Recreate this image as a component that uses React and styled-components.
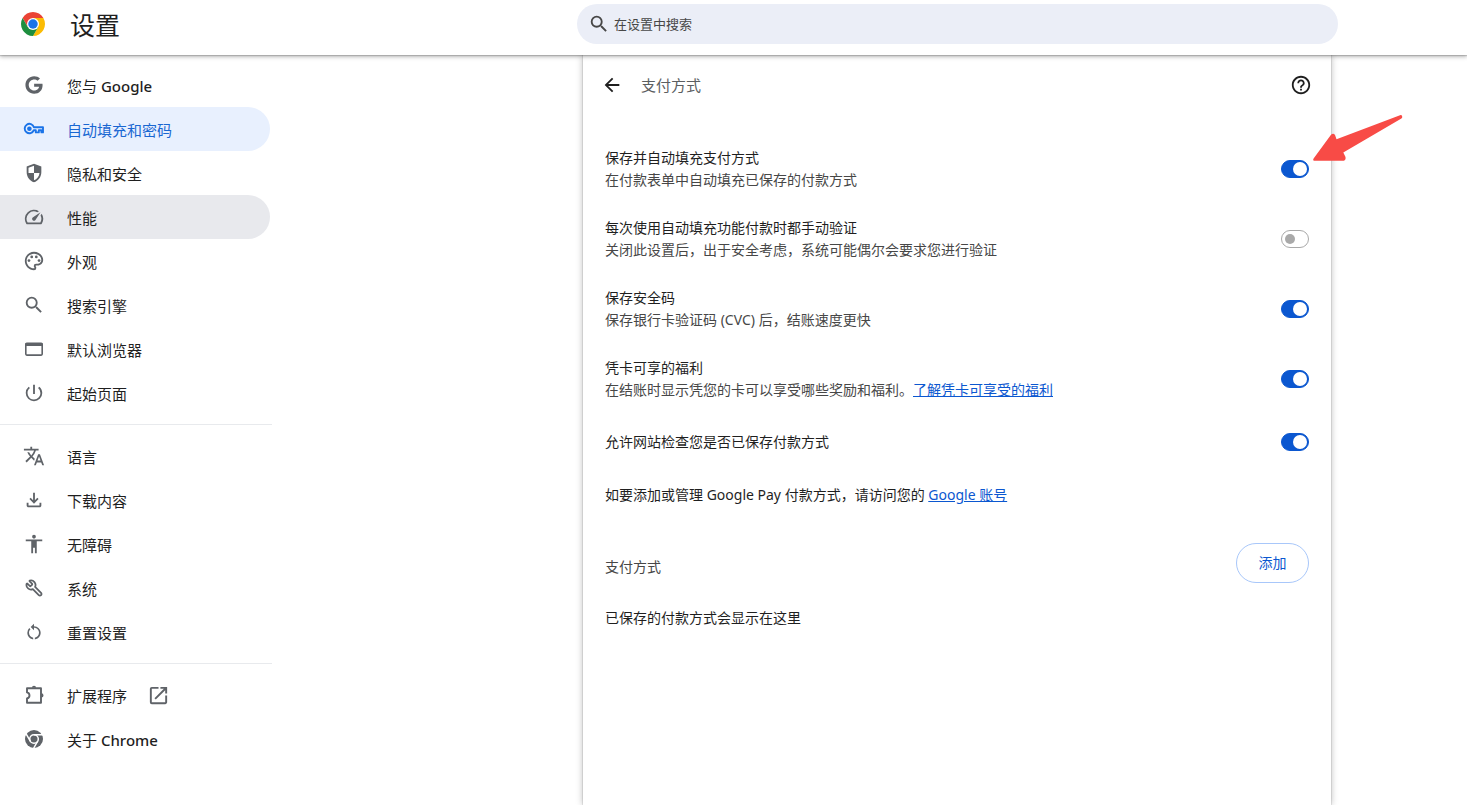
import React from "react";
import styled, { createGlobalStyle, css } from "styled-components";
import { FaGoogle } from "react-icons/fa";
import { Wrench } from "lucide-react";
import {
  MdAccessibility,
  MdArrowBack,
  MdHelpOutline,
  MdOpenInNew,
  MdOutlinePalette,
  MdPowerSettingsNew,
  MdRestartAlt,
  MdSearch,
  MdSpeed,
  MdTranslate,
} from "react-icons/md";

const GlobalStyle = createGlobalStyle`
  *, *::before, *::after { box-sizing: border-box; }
  body {
    margin: 0;
    background: #fff;
    color: #1f1f1f;
    font-family: "Noto Sans", "Noto Sans CJK SC", sans-serif;
    font-size: 14px;
    line-height: 22px;
  }
`;

const Page = styled.div`
  min-height: 100vh;
  display: flex;
  flex-direction: column;
`;

const TopBar = styled.header`
  position: sticky;
  top: 0;
  z-index: 2;
  height: 55px;
  display: grid;
  grid-template-columns: 272px 305fr minmax(0, 761px) 129fr;
  background: #fff;
  box-shadow: 0 1px 1px rgba(0, 0, 0, 0.16), 0 2px 4px rgba(0, 0, 0, 0.26);
`;

const Brand = styled.div`
  display: flex;
  align-items: center;
  gap: 25px;
  height: 48px;
  padding-left: 21px;
`;

const BrandTitle = styled.h1`
  margin: 0;
  padding-top: 2px;
  font-size: 25px;
  font-weight: 400;
  line-height: 32px;
`;

const SearchBox = styled.label`
  grid-column: 3;
  display: flex;
  align-items: center;
  gap: 4px;
  height: 40px;
  margin-top: 4px;
  padding: 0 20px 0 11px;
  border-radius: 20px;
  background: #ebeef7;
  color: #474747;
`;

const SearchInput = styled.input`
  flex: 1;
  min-width: 0;
  border: 0;
  padding: 0;
  outline: 0;
  background: transparent;
  font: inherit;
  font-size: 13px;
  color: #1f1f1f;
  &::placeholder {
    color: #474747;
    opacity: 1;
  }
`;

const Body = styled.div`
  flex: 1;
  display: grid;
  grid-template-columns: 272px 311fr minmax(0, 748px) 136fr;
`;

const Sidebar = styled.nav`
  padding-top: 8px;
`;

const NavGroup = styled.div`
  & + & {
    margin-top: 9px;
    padding-top: 9px;
    border-top: 1px solid #e8eaed;
  }
`;

const NavItem = styled.a`
  display: flex;
  align-items: center;
  height: 44px;
  margin-right: 2px;
  padding-left: 23px;
  border-radius: 0 22px 22px 0;
  color: #1f1f1f;
  font-size: 15px;
  text-decoration: none;
  ${(p) =>
    p.$state === "selected" &&
    css`
      background: #e8f0fe;
      color: #1967d2;
    `}
  ${(p) =>
    p.$state === "hovered" &&
    css`
      background: #e8e9ed;
    `}
`;

const NavIcon = styled.span`
  display: flex;
  justify-content: center;
  width: 22px;
  margin-right: 22px;
  color: ${(p) => (p.$active ? "#1a73e8" : "#5f6368")};
`;

const NavLabel = styled.span`
  padding-top: 1px;
  white-space: pre;
`;

const Latin = styled.span`
  font-weight: 500;
`;

const NavTrail = styled.span`
  display: flex;
  margin-left: 20px;
  color: #5f6368;
`;

const MirroredWrench = styled(Wrench)`
  transform: scaleX(-1);
`;

const Card = styled.main`
  grid-column: 3;
  background: #fff;
  box-shadow: 0 0 1px rgba(0, 0, 0, 0.45), 0 0 7px rgba(0, 0, 0, 0.28);
`;

const CardHeader = styled.div`
  display: flex;
  align-items: center;
  height: 60px;
  padding: 0 19px 0 18px;
`;

const CardTitle = styled.h2`
  flex: 1;
  margin: 0 0 0 18px;
  color: #5b5e61;
  font-size: 15px;
  font-weight: 400;
`;

const IconButton = styled.button`
  display: flex;
  border: 0;
  padding: 0;
  background: none;
  color: #1f1f1f;
  cursor: pointer;
`;

const SettingList = styled.div`
  padding: 19px 22px 0;
`;

const SettingRow = styled.div`
  display: flex;
  align-items: center;
  justify-content: space-between;
  gap: 22px;
  padding: ${(p) => (p.$single ? "17px 0 16px" : "13px 0")};
`;

const SettingTitle = styled.label`
  display: block;
`;

const SettingNote = styled.div`
  color: #474747;
`;

const TextLink = styled.a`
  color: #0b57d0;
  text-decoration: underline;
`;

const SwitchSlot = styled.span`
  position: relative;
  display: flex;
`;

const Switch = styled.input`
  appearance: none;
  display: flex;
  align-items: center;
  width: 28px;
  height: 18px;
  margin: 0;
  padding: 0 3px;
  border: 1px solid #a9a9a9;
  border-radius: 9px;
  background: #fff;
  cursor: pointer;
  &::before {
    content: "";
    width: 10px;
    height: 10px;
    border-radius: 50%;
    background: #a9a9a9;
  }
  &:checked {
    justify-content: flex-end;
    padding: 0 1px;
    border-color: #0b57d0;
    background: #0b57d0;
  }
  &:checked::before {
    width: 14px;
    height: 14px;
    background: #fff;
  }
`;

const Pointer = styled.svg`
  position: absolute;
  left: 31px;
  top: -46px;
  z-index: 1;
  pointer-events: none;
`;

const Paragraph = styled.p`
  margin: 0;
  padding: 15px 0;
`;

const SectionHeader = styled.div`
  display: flex;
  align-items: center;
  justify-content: space-between;
  margin-top: 22px;
`;

const SectionTitle = styled.h3`
  margin: 0;
  padding-top: 8px;
  color: #474747;
  font-size: 14px;
  font-weight: 400;
`;

const AddButton = styled.button`
  width: 73px;
  height: 40px;
  border: 1px solid #a8c7fa;
  border-radius: 20px;
  background: #fff;
  color: #0b57d0;
  font: inherit;
  cursor: pointer;
`;

const EmptyNote = styled.p`
  margin: 0;
  padding: 24px 0;
`;

const ChromeLogo = () => (
  <svg width="24" height="24" viewBox="0 0 48 48" aria-hidden="true">
    <path fill="#ea4335" d="M24 12h20.78A24 24 0 0 0 3.22 12l10.39 18L24 12Z" />
    <path fill="#fbbc04" d="M34.39 30 24 48A24 24 0 0 0 44.78 12H24l10.39 18Z" />
    <path fill="#1e8e3e" d="M13.61 30 3.22 12A24 24 0 0 0 24 48l10.39-18H13.61Z" />
    <circle cx="24" cy="24" r="12" fill="#fff" />
    <circle cx="24" cy="24" r="9.5" fill="#1a73e8" />
  </svg>
);

const KeyIcon = () => (
  <svg width="22" height="22" viewBox="0 0 22 22" fill="none" aria-hidden="true">
    <path
      d="M10.9 9.2H20v5.2h-1.6v-2.2h-2.6v2.2h-3v-2.2h-2a4.7 4.7 0 1 1 .1-3Z"
      stroke="currentColor"
      strokeWidth="1.9"
      strokeLinejoin="round"
    />
    <circle cx="6.4" cy="10.7" r="2.3" fill="currentColor" />
  </svg>
);

const ShieldIcon = () => (
  <svg width="22" height="22" viewBox="0 0 24 24" fill="currentColor" aria-hidden="true">
    <path
      fillRule="evenodd"
      d="M12 2 4 5v6.1c0 5 3.4 9.7 8 10.9 4.6-1.2 8-5.9 8-10.9V5l-8-3Zm0 2.1v7.9h6c-.4 3.7-2.800 6.900-6 7.900V12H6V6.300l6-2.200Z"
    />
  </svg>
);

const WindowIcon = () => (
  <svg width="22" height="22" viewBox="0 0 22 22" aria-hidden="true">
    <rect x="2.8" y="5.3" width="16.4" height="11.8" rx="1" fill="none" stroke="currentColor" strokeWidth="1.6" />
    <path d="M2.5 5h17v3h-17Z" fill="currentColor" />
  </svg>
);

const DownloadIcon = () => (
  <svg width="22" height="22" viewBox="0 0 24 24" fill="currentColor" aria-hidden="true">
    <path d="m12 16-5-5 1.4-1.45 2.6 2.6V4h2v8.150l2.6-2.6L17 11l-5 5Zm-6 4q-.825 0-1.413-.588T4 18v-3h2v3h12v-3h2v3q0 .825-.588 1.413T18 20H6Z" />
  </svg>
);

const PuzzleIcon = () => (
  <svg width="22" height="22" viewBox="0 0 22 22" aria-hidden="true">
    <path
      d="M4 4.2h14v14.5H4V14.400c3.300-.8 3.300-5.200 0-6Z"
      fill="none"
      stroke="currentColor"
      strokeWidth="1.900"
      strokeLinejoin="round"
    />
    <path d="M8.900 3.800a2.100 2.100 0 0 1 4.200 0ZM18.400 9.300a2.100 2.100 0 0 1 0 4.200Z" fill="currentColor" />
  </svg>
);

const ChromeMonoIcon = () => (
  <svg width="22" height="22" viewBox="0 0 22 22" aria-hidden="true">
    <circle cx="11" cy="11" r="9" fill="currentColor" />
    <circle cx="11" cy="11" r="4.3" fill="none" stroke="#fff" strokeWidth="1.5" />
    <path d="M11 6.700h9M7.300 13.200 2.800 5.400M14.700 13.200l-4.500 7.800" stroke="#fff" strokeWidth="1.5" />
  </svg>
);

const NAV = [
  [
    { icon: <FaGoogle size={18} />, text: "您与 ", latin: "Google" },
    { icon: <KeyIcon />, text: "自动填充和密码", state: "selected" },
    { icon: <ShieldIcon />, text: "隐私和安全" },
    { icon: <MdSpeed size={22} />, text: "性能", state: "hovered" },
    { icon: <MdOutlinePalette size={22} />, text: "外观" },
    { icon: <MdSearch size={22} />, text: "搜索引擎" },
    { icon: <WindowIcon />, text: "默认浏览器" },
    { icon: <MdPowerSettingsNew size={22} />, text: "起始页面" },
  ],
  [
    { icon: <MdTranslate size={22} />, text: "语言" },
    { icon: <DownloadIcon />, text: "下载内容" },
    { icon: <MdAccessibility size={22} />, text: "无障碍" },
    { icon: <MirroredWrench size={18} strokeWidth={2.4} />, text: "系统" },
    { icon: <MdRestartAlt size={20} />, text: "重置设置" },
  ],
  [
    { icon: <PuzzleIcon />, text: "扩展程序", trail: <MdOpenInNew size={23} /> },
    { icon: <ChromeMonoIcon />, text: "关于 ", latin: "Chrome" },
  ],
];

const SETTINGS = [
  {
    id: "save-fill",
    title: "保存并自动填充支付方式",
    note: "在付款表单中自动填充已保存的付款方式",
    on: true,
    pointed: true,
  },
  {
    id: "verify",
    title: "每次使用自动填充功能付款时都手动验证",
    note: "关闭此设置后，出于安全考虑，系统可能偶尔会要求您进行验证",
    on: false,
  },
  {
    id: "cvc",
    title: "保存安全码",
    note: "保存银行卡验证码 (CVC) 后，结账速度更快",
    on: true,
  },
  {
    id: "benefits",
    title: "凭卡可享的福利",
    note: "在结账时显示凭您的卡可以享受哪些奖励和福利。",
    link: "了解凭卡可享受的福利",
    on: true,
  },
  { id: "site-check", title: "允许网站检查您是否已保存付款方式", on: true },
];

export default function App() {
  return (
    <Page>
      <GlobalStyle />
      <TopBar>
        <Brand>
          <ChromeLogo />
          <BrandTitle>设置</BrandTitle>
        </Brand>
        <SearchBox htmlFor="settings-search">
          <MdSearch size={22} aria-hidden="true" />
          <SearchInput id="settings-search" type="text" placeholder="在设置中搜索" aria-label="在设置中搜索" />
        </SearchBox>
      </TopBar>
      <Body>
        <Sidebar>
          {NAV.map((group, i) => (
            <NavGroup key={i}>
              {group.map((item) => (
                <NavItem key={item.text} href="#" $state={item.state}>
                  <NavIcon $active={item.state === "selected"}>{item.icon}</NavIcon>
                  <NavLabel>
                    {item.text}
                    {item.latin && <Latin>{item.latin}</Latin>}
                  </NavLabel>
                  {item.trail && <NavTrail>{item.trail}</NavTrail>}
                </NavItem>
              ))}
            </NavGroup>
          ))}
        </Sidebar>
        <Card>
          <CardHeader>
            <IconButton type="button" aria-label="返回">
              <MdArrowBack size={22} />
            </IconButton>
            <CardTitle>支付方式</CardTitle>
            <IconButton type="button" aria-label="帮助">
              <MdHelpOutline size={22} />
            </IconButton>
          </CardHeader>
          <SettingList>
            {SETTINGS.map((s) => (
              <SettingRow key={s.id} $single={!s.note}>
                <div>
                  <SettingTitle htmlFor={s.id}>{s.title}</SettingTitle>
                  {s.note && (
                    <SettingNote>
                      {s.note}
                      {s.link && <TextLink href="#">{s.link}</TextLink>}
                    </SettingNote>
                  )}
                </div>
                <SwitchSlot>
                  <Switch id={s.id} type="checkbox" role="switch" defaultChecked={s.on} />
                  {s.pointed && (
                    <Pointer width="92" height="50" viewBox="0 0 92 50" aria-hidden="true">
                      <path
                        fill="#f84b46"
                        d="M1.6 44.4 19 20.8q2.300-2.200 4 .2l1.500 4.200L88 1.200q1.800-.5 2.200 1.200.3 1.500-.8 2.200L31.300 38.400l2.200 4.600q.5 3.200-1.700 3.700L3 46.800q-2.700-.3-1.400-2.400Z"
                      />
                    </Pointer>
                  )}
                </SwitchSlot>
              </SettingRow>
            ))}
            <Paragraph>
              如要添加或管理 Google Pay 付款方式，请访问您的 <TextLink href="#">Google 账号</TextLink>
            </Paragraph>
            <SectionHeader>
              <SectionTitle>支付方式</SectionTitle>
              <AddButton type="button">添加</AddButton>
            </SectionHeader>
            <EmptyNote>已保存的付款方式会显示在这里</EmptyNote>
          </SettingList>
        </Card>
      </Body>
    </Page>
  );
}
